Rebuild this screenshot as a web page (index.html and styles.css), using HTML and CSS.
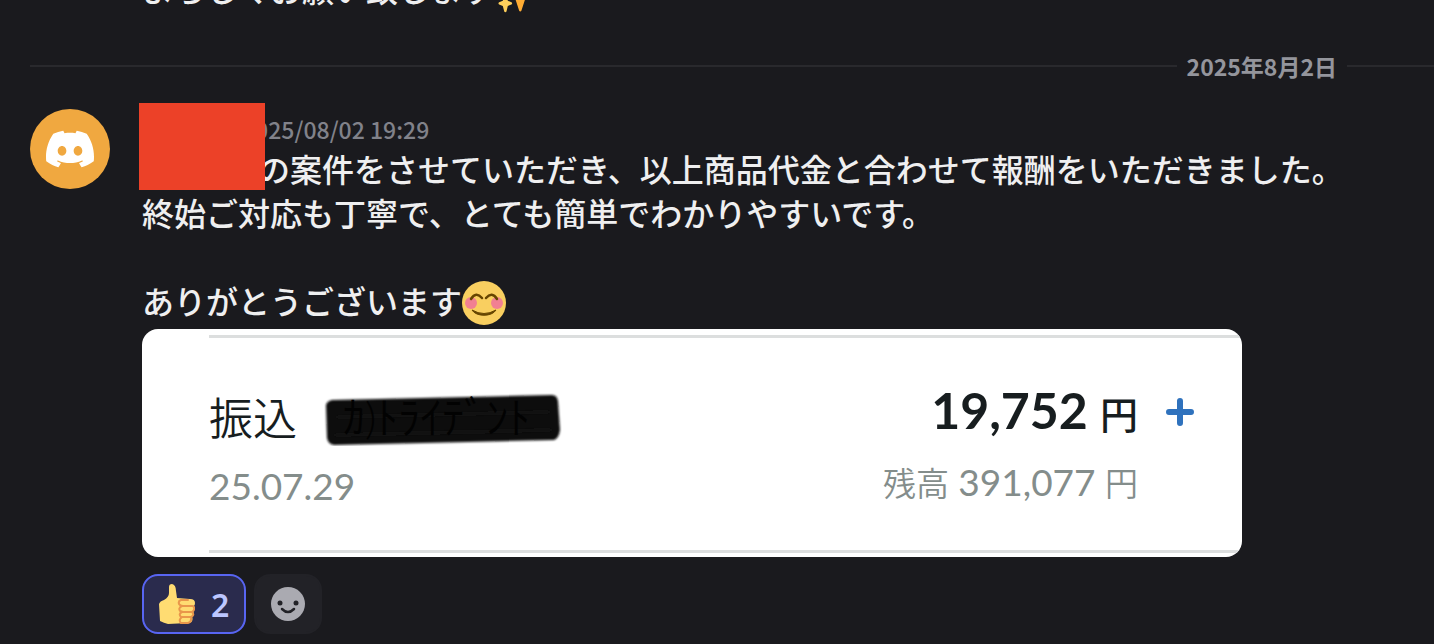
FILE: index.html
```html
<!DOCTYPE html>
<html lang="ja">
<head>
    <meta charset="UTF-8">
    <meta name="viewport" content="width=device-width, initial-scale=1.0">
    <title>チャット</title>
    <link rel="stylesheet" href="styles.css">
</head>
<body>
    <main class="chat">
        <div class="previous">
            <p class="text">よろしくお願い致します<svg class="emoji" viewBox="0 -2 36 36" role="img" aria-label="✨"><path fill="#ffac33" d="M34.3 16.9l-8.6-3.3-3.3-8.6a1 1 0 0 0-1.8 0l-3.3 8.6-8.6 3.3a1 1 0 0 0 0 1.8l8.6 3.3 3.3 10.200a1 1 0 0 0 1.8 0l3.3-10.200 8.6-3.3a1 1 0 0 0 0-1.8z"/><path fill="#ffd05b" d="M14.3 25.200l-3-1.2-1.1-4.4a1 1 0 0 0-1.8 0L7.200 24l-3 1.200a1 1 0 0 0 0 1.800l3 1.200 1.200 4.600a1 1 0 0 0 1.800 0l1.100-4.600 3-1.200a1 1 0 0 0 0-1.800z"/></svg></p>
        </div>

        <div class="divider"><time datetime="2025-08-02">2025年8月2日</time></div>

        <article class="message">
            <div class="avatar">
                <svg viewBox="0 0 24 24" width="48" height="48" fill="#fff"><path d="M20.317 4.3698a19.7913 19.7913 0 00-4.8851-1.5152.0741.0741 0 00-.0785.0371c-.211.3753-.4447.8648-.6083 1.2495-1.8447-.2762-3.68-.2762-5.4868 0-.1636-.3933-.4058-.8742-.6177-1.2495a.077.077 0 00-.0785-.037 19.7363 19.7363 0 00-4.8852 1.515.0699.0699 0 00-.0321.0277C.5334 9.0458-.319 13.5799.0992 18.0578a.0824.0824 0 00.0312.0561c2.0528 1.5076 4.0413 2.4228 5.9929 3.0294a.0777.0777 0 00.0842-.0276c.4616-.6304.8731-1.2952 1.226-1.9942a.076.076 0 00-.0416-.1057c-.6528-.2476-1.2743-.5495-1.8722-.8923a.077.077 0 01-.0076-.1277c.1258-.0943.2517-.1923.3718-.2914a.0743.0743 0 01.0776-.0105c3.9278 1.7933 8.18 1.7933 12.0614 0a.0739.0739 0 01.0785.0095c.1202.099.246.1981.3728.2924a.077.077 0 01-.0066.1276 12.2986 12.2986 0 01-1.873.8914.0766.0766 0 00-.0407.1067c.3604.698.7719 1.3628 1.225 1.9932a.076.076 0 00.0842.0286c1.961-.6067 3.9495-1.5219 6.0023-3.0294a.077.077 0 00.0313-.0552c.5004-5.177-.8382-9.6739-3.5485-13.6604a.061.061 0 00-.0312-.0286zM8.02 15.3312c-1.1825 0-2.1569-1.0857-2.1569-2.419 0-1.3332.9555-2.4189 2.157-2.4189 1.2108 0 2.1757 1.0952 2.1568 2.419 0 1.3332-.9555 2.4189-2.1569 2.4189zm7.9748 0c-1.1825 0-2.1569-1.0857-2.1569-2.419 0-1.3332.9554-2.4189 2.1569-2.4189 1.2108 0 2.1757 1.0952 2.1568 2.419 0 1.3332-.946 2.4189-2.1568 2.4189Z"/></svg>
            </div>
            <div class="content">
                <div class="redaction"></div>
                <header><time datetime="2025-08-02T19:29">2025/08/02 19:29</time></header>
                <p class="text first-line">の案件をさせていただき、以上商品代金と合わせて報酬をいただきました。</p>
                <p class="text">終始ご対応も丁寧で、とても簡単でわかりやすいです。<br><br>ありがとうございます<svg class="emoji" viewBox="0 0 44 44" role="img" aria-label="😊"><circle cx="22" cy="22" r="22" fill="#f9cf60"/><circle cx="9" cy="22" r="6" fill="#f18092"/><circle cx="35" cy="22" r="6" fill="#f18092"/><path d="M9 18q5-8 11-1M24 17q6-7 11 1" fill="none" stroke="#664500" stroke-width="2.500" stroke-linecap="round"/><path d="M10 29q12 7 24 0c-4 7-20 7-24 0z" fill="#664500" stroke="#664500" stroke-linejoin="round"/></svg></p>

                <div class="card">
                    <div class="card-row">
                        <div class="payee">
                            <div class="payee-name">
                                <span>振込</span>
                                <span class="scribble">
                                    <svg viewBox="0 0 240 56" width="240" height="56">
                                        <defs><filter id="soft"><feGaussianBlur stdDeviation="1"/></filter></defs>
                                        <path d="M9 10L229 5Q234 5 235 11L237 40Q236 48 231 50L11 55Q5 54 4 48L3 15Q4 11 9 10z" fill="#111" filter="url(#soft)"/>
                                        <path d="M14 27L226 22M12 45L228 40" fill="none" stroke="#191919" stroke-width="2" filter="url(#soft)"/>
                                    </svg>
                                    <span class="scribble-text">ｶ)ﾄﾗｲﾃﾞﾝﾄ</span>
                                </span>
                            </div>
                            <div class="small">25.07.29</div>
                        </div>
                        <div class="sum">
                            <div class="amount">19,752 <span class="yen">円</span></div>
                            <div class="small"><span class="kanji">残高</span> 391,077 <span class="kanji">円</span></div>
                        </div>
                        <svg class="plus" viewBox="0 0 28 28" width="28" height="28"><path d="M14 3v22M3 14h22" stroke="#2f72bd" stroke-width="6" stroke-linecap="round"/></svg>
                    </div>
                </div>

                <div class="reactions">
                    <button class="reaction reacted" type="button" aria-label="👍 2">
                        <svg viewBox="0 0 36 40" width="36" height="40"><path fill="#ffdc72" d="M10 3Q10 0 13 0Q17 1 17 7L18 14L31 15Q36 15 36 19Q36 21 35 22Q37 25 34 27Q36 31 33 32Q35 39 29 39L9 40Q5 39 1 37L0 20Q1 17 5 16Q10 13 10 9z"/><path fill="none" stroke="#e9964b" stroke-width="2" stroke-linecap="round" d="M29 16H22Q19 17 20 20Q21 22 24 22H34M23 22Q19 24 21 27L24 28H33M23 28Q19 30 22 33H32M23 33Q19 36 22 39H29Q33 38 32 33M34 22Q37 25 33 28Q36 31 32 33"/></svg>
                        <span>2</span>
                    </button>
                    <button class="reaction add" type="button" aria-label="リアクションを付ける">
                        <svg viewBox="0 0 34 34" width="34" height="34"><circle cx="17" cy="17" r="17" fill="#aaaab1"/><circle cx="9" cy="16" r="2.500" fill="#222227"/><circle cx="25" cy="16" r="2.500" fill="#222227"/><path d="M11 22q6 6 12 0" fill="none" stroke="#222227" stroke-width="2.500" stroke-linecap="round"/></svg>
                    </button>
                </div>
            </div>
        </article>
    </main>
</body>
</html>
```
FILE: styles.css
```css
* {
    box-sizing: border-box;
}
body {
    margin: 0;
    background-color: #1a1a1e;
    color: #efeff0;
    font-family: "Noto Sans CJK JP", sans-serif;
}
.chat {
    overflow: hidden;
}
.text {
    margin: 0;
    font-size: 32px;
    font-weight: 500;
    line-height: 44px;
}
.emoji {
    width: 44px;
    height: 44px;
    margin-bottom: -3px;
    vertical-align: bottom;
}
/* last line of the message scrolled off the top */
.previous {
    display: flex;
    align-items: flex-end;
    height: 12px;
    padding: 0 0 2px 142px;
}
.divider {
    display: flex;
    align-items: center;
    gap: 10px;
    margin: 39px 0 27px 30px;
    color: #94959c;
    font-size: 23px;
    font-weight: 700;
    line-height: 28px;
    height: 30px;
}
.divider::before,
.divider::after {
    content: "";
    height: 2px;
    background-color: #29292d;
}
.divider::before {
    flex: 1;
}
.divider::after {
    width: 87px;
}
.message {
    display: flex;
    gap: 32px;
    padding: 0 30px;
}
.avatar {
    display: flex;
    align-items: center;
    justify-content: center;
    flex: none;
    width: 80px;
    height: 80px;
    margin-top: 1px;
    border-radius: 50%;
    background-color: #f0a840;
}
.content {
    position: relative;
    flex: 1;
    min-width: 0;
}
.redaction {
    position: absolute;
    top: -5px;
    left: -3px;
    width: 126px;
    height: 87px;
    background-color: #ec4128;
}
header {
    height: 38px;
    padding-left: 100px;
    color: #81828a;
    font-size: 23px;
    font-weight: 500;
    line-height: 42px;
}
.first-line {
    padding-left: 116px;
}
.card {
    max-width: 1100px;
    margin-top: 7px;
    padding: 6px 0 4px 67px;
    border-radius: 16px;
    background-color: #fff;
    color: #171d1f;
    overflow: hidden;
}
.card-row {
    display: flex;
    border-top: 3px solid #dcdede;
    border-bottom: 3px solid #dcdede;
    height: 218px;
    padding: 40px 48px 0 0;
    font-family: Lato, "Noto Sans CJK JP", sans-serif;
}
.payee {
    flex: 1;
}
.payee-name {
    display: flex;
    align-items: center;
    gap: 26px;
    margin-bottom: 4px;
    font-size: 44px;
    font-weight: 350;
    line-height: 80px;
}
.scribble {
    position: relative;
    display: flex;
}
.scribble-text {
    position: absolute;
    top: 0;
    left: 20px;
    color: #020202;
    line-height: 54px;
    white-space: nowrap;
}
.small {
    color: #848d8b;
    font-size: 37px;
    font-weight: 400;
    line-height: 48px;
}
.sum {
    text-align: right;
}
.amount {
    margin-bottom: 12px;
    font-size: 50px;
    font-weight: 700;
    line-height: 64px;
}
.yen {
    font-size: 38px;
    font-weight: 500;
}
.kanji {
    font-size: 33px;
    font-weight: 350;
}
.plus {
    margin: 20px 0 0 28px;
}
.reactions {
    display: flex;
    gap: 8px;
    margin-top: 17px;
}
.reaction {
    display: flex;
    align-items: center;
    justify-content: center;
    gap: 16px;
    height: 60px;
    padding: 0 15px;
    border: 2px solid #222227;
    border-radius: 16px;
    background-color: #222227;
    cursor: pointer;
}
.reacted {
    border-color: #5865f2;
    background-color: #2a2b4d;
    color: #bcc6ff;
    font-family: "Noto Sans", sans-serif;
    font-size: 32px;
    font-weight: 600;
}
.add {
    width: 68px;
}
```
